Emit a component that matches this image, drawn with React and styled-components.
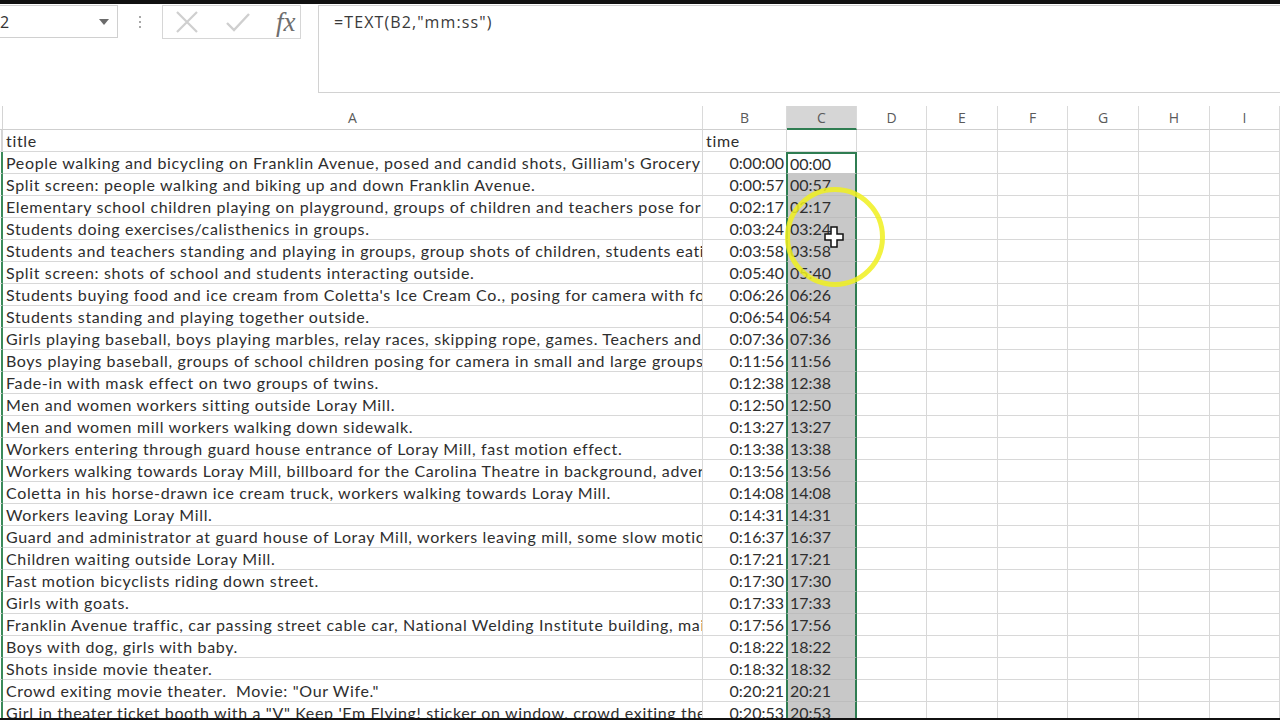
import React from 'react';
import styled, { createGlobalStyle } from 'styled-components';

const rows = [
  ['People walking and bicycling on Franklin Avenue, posed and candid shots, Gilliam\'s Grocery', '0:00:00'],
  ['Split screen: people walking and biking up and down Franklin Avenue.', '0:00:57'],
  ['Elementary school children playing on playground, groups of children and teachers pose for camera', '0:02:17'],
  ['Students doing exercises/calisthenics in groups.', '0:03:24'],
  ['Students and teachers standing and playing in groups, group shots of children, students eating', '0:03:58'],
  ['Split screen: shots of school and students interacting outside.', '0:05:40'],
  ['Students buying food and ice cream from Coletta\'s Ice Cream Co., posing for camera with food', '0:06:26'],
  ['Students standing and playing together outside.', '0:06:54'],
  ['Girls playing baseball, boys playing marbles, relay races, skipping rope, games. Teachers and', '0:07:36'],
  ['Boys playing baseball, groups of school children posing for camera in small and large groups', '0:11:56'],
  ['Fade-in with mask effect on two groups of twins.', '0:12:38'],
  ['Men and women workers sitting outside Loray Mill.', '0:12:50'],
  ['Men and women mill workers walking down sidewalk.', '0:13:27'],
  ['Workers entering through guard house entrance of Loray Mill, fast motion effect.', '0:13:38'],
  ['Workers walking towards Loray Mill, billboard for the Carolina Theatre in background, advertising', '0:13:56'],
  ['Coletta in his horse-drawn ice cream truck, workers walking towards Loray Mill.', '0:14:08'],
  ['Workers leaving Loray Mill.', '0:14:31'],
  ['Guard and administrator at guard house of Loray Mill, workers leaving mill, some slow motion', '0:16:37'],
  ['Children waiting outside Loray Mill.', '0:17:21'],
  ['Fast motion bicyclists riding down street.', '0:17:30'],
  ['Girls with goats.', '0:17:33'],
  ['Franklin Avenue traffic, car passing street cable car, National Welding Institute building, main', '0:17:56'],
  ['Boys with dog, girls with baby.', '0:18:22'],
  ['Shots inside movie theater.', '0:18:32'],
  ['Crowd exiting movie theater.  Movie: "Our Wife."', '0:20:21'],
  ['Girl in theater ticket booth with a "V" Keep \'Em Flying! sticker on window, crowd exiting theater', '0:20:53'],
];

const cols = ['A', 'B', 'C', 'D', 'E', 'F', 'G', 'H', 'I'];
const emptyCols = ['D', 'E', 'F', 'G', 'H', 'I'];

const GlobalStyle = createGlobalStyle`
  html, body {
    margin: 0;
    padding: 0;
    background: #ffffff;
  }
  body {
    font-family: Lato, "Open Sans", sans-serif;
  }
`;

const Page = styled.div`
  width: 1280px;
  height: 720px;
  overflow: hidden;
  position: relative;
  background: #ffffff;
  border-top: 4px solid #111;
  border-bottom: 2px solid #111;
  box-sizing: border-box;
`;

const FormulaBar = styled.div`
  height: 102px;
  display: flex;
  align-items: flex-start;
  padding-top: 1px;
  box-sizing: border-box;
`;

const NameBox = styled.div`
  width: 118px;
  height: 33px;
  box-sizing: border-box;
  border: 1px solid #d0d0d0;
  border-left: none;
  display: flex;
  align-items: center;
  justify-content: space-between;
  padding-right: 8px;
  font-family: "Open Sans", sans-serif;
  font-size: 16px;
  color: #333;
`;

const Caret = styled.span`
  width: 0;
  height: 0;
  border-left: 5px solid transparent;
  border-right: 5px solid transparent;
  border-top: 6px solid #6b6b6b;
`;

const Dots = styled.div`
  width: 44px;
  height: 33px;
  display: flex;
  flex-direction: column;
  align-items: center;
  justify-content: center;
  gap: 3px;

  span {
    width: 2px;
    height: 2px;
    background: #a8a8a8;
  }
`;

const Buttons = styled.div`
  width: 139px;
  height: 34px;
  box-sizing: border-box;
  border: 1px solid #d6d6d6;
  display: flex;
  align-items: center;
  gap: 24px;
  padding-left: 11px;
`;

const Fx = styled.span`
  font-family: "Liberation Serif", serif;
  font-style: italic;
  font-size: 27px;
  color: #6e6e6e;
  line-height: 1;
`;

const FormulaInput = styled.div`
  margin-left: 17px;
  flex: 1;
  height: 88px;
  box-sizing: border-box;
  border: 1px solid #d2d2d2;
  border-right: none;
  padding: 5px 15px;
  font-family: "Open Sans", sans-serif;
  font-size: 16px;
  letter-spacing: 1.1px;
  color: #3a3a3a;
`;

const Grid = styled.div`
  display: grid;
  grid-template-columns: 3px 700px 84px 70px 70px 71px 70px 71px 71px 70px;
  grid-template-rows: 24px;
  grid-auto-rows: 22px;
  font-family: Lato, sans-serif;
  font-size: 16px;
  letter-spacing: 0.65px;
  color: #2e2e2e;
`;

const RowHead = styled.div`
  border-right: 2px solid ${(p) => (p.$sel ? '#3b8a5a' : '#d4d4d4')};
  border-bottom: 1px solid #e2e2e2;
  box-sizing: border-box;
`;

const ColHead = styled.div`
  box-sizing: border-box;
  border-right: 1px solid #dadada;
  border-bottom: ${(p) => (p.$sel ? '2px solid #2f7d52' : '1px solid #cfcfcf')};
  background: ${(p) => (p.$sel ? '#d6d6d6' : '#ffffff')};
  display: flex;
  align-items: center;
  justify-content: center;
  font-family: "Open Sans", sans-serif;
  font-size: 14px;
  letter-spacing: 0;
  color: #5a5a5a;
`;

const Corner = styled.div`
  border-right: 1px solid #d4d4d4;
  border-bottom: 1px solid #cfcfcf;
  box-sizing: border-box;
`;

const Cell = styled.div`
  box-sizing: border-box;
  border-right: 1px solid #d8d8d8;
  border-bottom: 1px solid #d8d8d8;
  display: flex;
  align-items: center;
  justify-content: ${(p) => (p.$right ? 'flex-end' : 'flex-start')};
  padding: 0 2px 0 3px;
  white-space: pre;
  overflow: hidden;
  line-height: 1;
  letter-spacing: ${(p) => (p.$right ? '0' : 'inherit')};
`;

const SelCell = styled(Cell)`
  background: ${(p) => (p.$active ? '#ffffff' : '#c8c8c8')};
  border-left: 2px solid #2f7d52;
  border-right: 2px solid #2f7d52;
  border-top: ${(p) => (p.$active ? '2px solid #2f7d52' : 'none')};
  border-bottom: 1px solid ${(p) => (p.$active ? '#c8c8c8' : '#bdbdbd')};
  margin-left: -1px;
  padding-left: 2px;
  letter-spacing: 0;
`;

const Highlight = styled.div`
  position: absolute;
  left: 785px;
  top: 183px;
  width: 90px;
  height: 90px;
  border-radius: 50%;
  border: 5px solid rgba(240, 240, 30, 0.85);
  filter: blur(0.6px);
  pointer-events: none;
`;

const Cursor = styled.svg`
  position: absolute;
  left: 824px;
  top: 222px;
  pointer-events: none;
`;

function CloseIcon() {
  return (
    <svg width="26" height="26" viewBox="0 0 26 26">
      <path d="M3 3 L23 23 M23 3 L3 23" stroke="#cfcfcf" strokeWidth="2.2" fill="none" />
    </svg>
  );
}

function CheckIcon() {
  return (
    <svg width="28" height="26" viewBox="0 0 28 26">
      <path d="M3 14 L10 21 L25 5" stroke="#cfcfcf" strokeWidth="2.4" fill="none" />
    </svg>
  );
}

export default function App() {
  return (
    <>
      <GlobalStyle />
      <Page>
        <FormulaBar>
          <NameBox>
            <span>2</span>
            <Caret />
          </NameBox>
          <Dots>
            <span />
            <span />
            <span />
          </Dots>
          <Buttons>
            <CloseIcon />
            <CheckIcon />
            <Fx>fx</Fx>
          </Buttons>
          <FormulaInput>=TEXT(B2,"mm:ss")</FormulaInput>
        </FormulaBar>

        <Grid>
          <Corner />
          {cols.map((c) => (
            <ColHead key={c} $sel={c === 'C'}>
              {c}
            </ColHead>
          ))}

          <RowHead />
          <Cell>title</Cell>
          <Cell>time</Cell>
          <Cell />
          {emptyCols.map((c) => (
            <Cell key={c} />
          ))}

          {rows.map(([title, time], i) => (
            <React.Fragment key={i}>
              <RowHead $sel />
              <Cell>{title}</Cell>
              <Cell $right>{time}</Cell>
              <SelCell $active={i === 0}>{time.slice(2)}</SelCell>
              {emptyCols.map((c) => (
                <Cell key={c} />
              ))}
            </React.Fragment>
          ))}
        </Grid>

        <Highlight />
        <Cursor width="20" height="22" viewBox="0 0 20 22">
          <path
            d="M7 1 H13 V8 H19 V14 H13 V21 H7 V14 H1 V8 H7 Z"
            fill="#ffffff"
            stroke="#111"
            strokeWidth="1.5"
          />
        </Cursor>
      </Page>
    </>
  );
}
